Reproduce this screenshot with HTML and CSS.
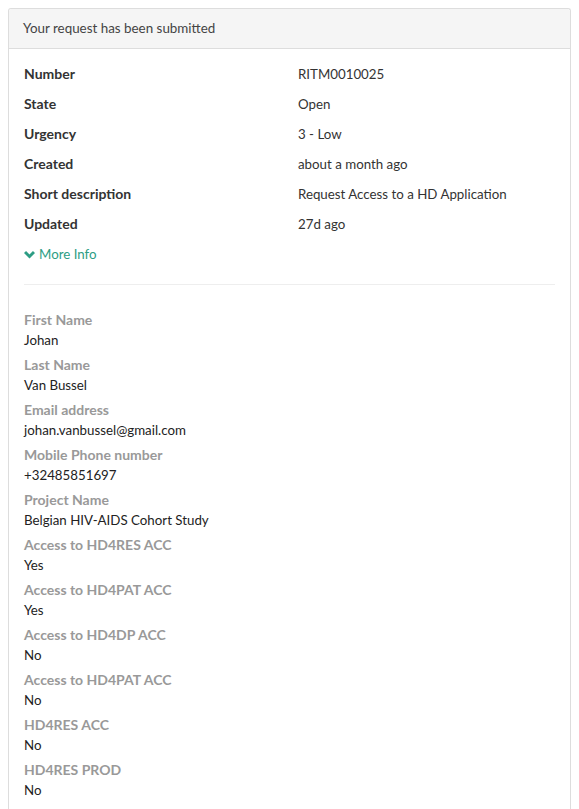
FILE: index.html
```html
<!DOCTYPE html>
<html>
<head>
<meta charset="utf-8">
<link rel="stylesheet" href="styles.css">
</head>
<body>
<div class="panel">
  <div class="panel-heading">Your request has been submitted</div>
  <div class="panel-body">
    <dl class="summary">
      <dt>Number</dt><dd>RITM0010025</dd>
      <dt>State</dt><dd>Open</dd>
      <dt>Urgency</dt><dd>3 - Low</dd>
      <dt>Created</dt><dd>about a month ago</dd>
      <dt>Short description</dt><dd>Request Access to a HD Application</dd>
      <dt>Updated</dt><dd>27d ago</dd>
    </dl>
    <a class="more-info" href="#"><svg class="chev" viewBox="0 0 12 10" width="11" height="9"><path d="M1 2.2 L6 7.2 L11 2.2" fill="none" stroke="#2d9d84" stroke-width="3.2" stroke-linecap="butt" stroke-linejoin="miter"/></svg>More Info</a>
    <hr class="divider">
    <div class="vars">
      <div class="var"><div class="var-label">First Name</div><div class="var-value">Johan</div></div>
      <div class="var"><div class="var-label">Last Name</div><div class="var-value">Van Bussel</div></div>
      <div class="var"><div class="var-label">Email address</div><div class="var-value">johan.vanbussel@gmail.com</div></div>
      <div class="var"><div class="var-label">Mobile Phone number</div><div class="var-value">+32485851697</div></div>
      <div class="var"><div class="var-label">Project Name</div><div class="var-value">Belgian HIV-AIDS Cohort Study</div></div>
      <div class="var"><div class="var-label">Access to HD4RES ACC</div><div class="var-value">Yes</div></div>
      <div class="var"><div class="var-label">Access to HD4PAT ACC</div><div class="var-value">Yes</div></div>
      <div class="var"><div class="var-label">Access to HD4DP ACC</div><div class="var-value">No</div></div>
      <div class="var"><div class="var-label">Access to HD4PAT ACC</div><div class="var-value">No</div></div>
      <div class="var"><div class="var-label">HD4RES ACC</div><div class="var-value">No</div></div>
      <div class="var"><div class="var-label">HD4RES PROD</div><div class="var-value">No</div></div>
    </div>
  </div>
</div>
</body>
</html>
```

FILE: styles.css
```css
html, body {
  margin: 0;
  padding: 0;
  background: #fff;
}
body {
  padding: 8px 8px 0 8px;
  font-family: "Lato", "Liberation Sans", sans-serif;
  font-size: 13.3px;
  color: #333;
}
.panel {
  border: 1px solid #dddddd;
  border-bottom: none;
  border-radius: 3px 3px 0 0;
  background: #fff;
}
.panel-heading {
  background: #f5f5f5;
  border-bottom: 1px solid #dddddd;
  height: 39px;
  line-height: 39px;
  padding: 0 14px;
  color: #444;
  font-size: 13.4px;
  border-radius: 3px 3px 0 0;
}
.panel-body {
  padding: 10px 15px 20px 15px;
}
.summary {
  display: grid;
  grid-template-columns: 274px 1fr;
  grid-auto-rows: 30px;
  margin: 0;
  align-items: baseline;
}
.summary dt {
  font-weight: bold;
  font-size: 14px;
  line-height: 30px;
  color: #333;
}
.summary dd {
  margin: 0;
  line-height: 30px;
  color: #333;
}
.more-info {
  display: flex;
  align-items: center;
  height: 30px;
  color: #2d9d84;
  text-decoration: none;
}
.chev {
  margin-right: 4px;
}
.divider {
  border: 0;
  border-top: 1px solid #eeeeee;
  margin: 15px 0 25px 0;
}
.var {
  height: 45px;
}
.var-label {
  font-weight: bold;
  font-size: 14px;
  color: #999;
  line-height: 20px;
}
.var-value {
  line-height: 20px;
  color: #222;
}
```
